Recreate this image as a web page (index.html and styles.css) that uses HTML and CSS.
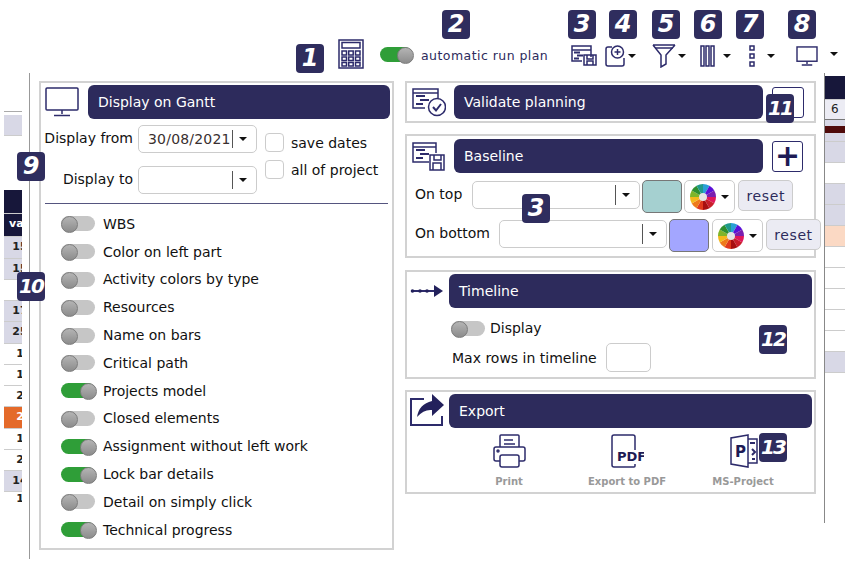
FILE: index.html
```html
<!DOCTYPE html>
<html lang="en">
<head>
    <meta charset="UTF-8" />
    <title>Gantt options</title>
    <link rel="stylesheet" href="styles.css">
</head>
<body>
<div class="screen">
    <div class="toolbar">
        <svg class="ico calc" viewBox="0 0 26 30"><rect x="1" y="1" width="24" height="28"/><rect x="4" y="3.500" width="18" height="5.500"/><path d="M4 12h4.500v4H4zM10.700 12h4.500v4h-4.500zM17.500 12H22v4h-4.500zM4 18h4.500v3.500H4zM10.700 18h4.500v3.500h-4.500zM17.500 18H22v3.500h-4.500zM4 23.500h4.500V27H4zM10.700 23.500h4.500V27h-4.500zM17.500 23.500H22V27h-4.500z"/></svg>
        <span class="toggle on run-toggle"></span>
        <span class="run-label">automatic run plan</span>
        <span class="tools">
            <svg class="ico t-base" viewBox="0 0 26 21"><path d="M20 12V1H1v15h10"/><path d="M1 5h19" /><path class="thick" d="M3 7.500h6M6 10.500h6M3 13.500h5"/><path d="M13 10h12v10H13zM16 10v4h6v-4M16 20v-4h6v4"/></svg>
            <svg class="ico t-add" viewBox="0 0 21 22"><path d="M7 2H3Q1 2 1 4v15q0 2 2 2h14q2 0 2-2v-6"/><circle cx="12.500" cy="7" r="6"/><path d="M12.500 4v6M9.500 7h6"/></svg>
            <i class="caret c-add"></i>
            <svg class="ico t-filter" viewBox="0 0 24 24"><path d="M1 1h22M1 1l8 10v12l5-3v-9l9-10"/><path d="M3 4h18"/></svg>
            <i class="caret c-filter"></i>
            <svg class="ico t-cols" viewBox="0 0 15 22"><path d="M1 1h3v20H1zM6 1h3v20H6zM11 1h3v20h-3z"/></svg>
            <i class="caret c-cols"></i>
            <svg class="ico t-rows" viewBox="0 0 6 22"><path d="M1 1h4v4H1zM1 9h4v4H1zM1 17h4v4H1z"/></svg>
            <i class="caret c-rows"></i>
            <svg class="ico t-mon" viewBox="0 0 23 21"><rect x="1" y="1" width="21" height="15"/><path d="M11.500 16v3M6 20h11"/></svg>
            <i class="caret c-mon"></i>
        </span>
    </div>

    <div class="main">
        <div class="gantt gantt-left">
            <div class="g g-line"></div>
            <div class="g g-lav g-20"></div>
            <div class="g g-space"></div>
            <div class="g g-dark g-24"></div>
            <div class="g g-head">va</div>
            <div class="g g-lav"><b>15</b></div>
            <div class="g g-lav"><b>15</b></div>
            <div class="g"></div>
            <div class="g g-lav"><b>17</b></div>
            <div class="g g-lav"><b>25</b></div>
            <div class="g"><b>1</b></div>
            <div class="g"><b>1</b></div>
            <div class="g"><b>2</b></div>
            <div class="g g-orange"><b>2</b></div>
            <div class="g"><b>1</b></div>
            <div class="g"><b>2</b></div>
            <div class="g g-lav"><b>14</b></div>
            <div class="g g-last"><b>1</b></div>
        </div>

        <div class="dialog">
            <section class="box left-box">
                <div class="box-head">
                    <svg class="ico head-mon" viewBox="0 0 34 30"><rect x="1" y="1" width="32" height="22" rx="1"/><path d="M17 23v4M9 28.500h16"/></svg>
                    <h2 class="bar">Display on Gantt</h2>
                </div>
                <div class="dates">
                    <div class="date-fields">
                        <div class="date-row">
                            <label class="from-label">Display from</label>
                            <span class="combo date-combo"><span class="combo-val">30/08/2021</span><i class="caret"></i></span>
                        </div>
                        <div class="date-row">
                            <label>Display to</label>
                            <span class="combo date-combo"><span class="combo-val"></span><i class="caret"></i></span>
                        </div>
                    </div>
                    <div class="date-checks">
                        <label class="check"><i class="box-check"></i>save dates</label>
                        <label class="check"><i class="box-check"></i>all of project</label>
                    </div>
                </div>
                <hr class="rule">
                <ul class="options">
                    <li><span class="toggle"></span>WBS</li>
                    <li><span class="toggle"></span>Color on left part</li>
                    <li><span class="toggle"></span>Activity colors by type</li>
                    <li><span class="toggle"></span>Resources</li>
                    <li><span class="toggle"></span>Name on bars</li>
                    <li><span class="toggle"></span>Critical path</li>
                    <li><span class="toggle on"></span>Projects model</li>
                    <li><span class="toggle"></span>Closed elements</li>
                    <li><span class="toggle on"></span>Assignment without left work</li>
                    <li><span class="toggle on"></span>Lock bar details</li>
                    <li><span class="toggle"></span>Detail on simply click</li>
                    <li><span class="toggle on"></span>Technical progress</li>
                </ul>
            </section>

            <div class="right-col">
                <section class="box validate-box">
                    <div class="box-head head-right">
                        <svg class="ico head-plan" viewBox="0 0 34 30"><path d="M26 11V2H1v19h12"/><path d="M1 6h25"/><path class="thick" d="M4 9h9M8 13h9M4 17h7"/><circle cx="25" cy="20" r="8.500"/><path class="thick" d="M21 20l3 3.500 5-6.500"/></svg>
                        <h2 class="bar">Validate planning</h2>
                        <span class="square-btn"></span>
                    </div>
                </section>

                <section class="box baseline-box">
                    <div class="box-head head-right">
                        <svg class="ico head-plan" viewBox="0 0 34 30"><path d="M24 12V2H1v19h16"/><path d="M1 6h23"/><path class="thick" d="M4 9h9M8 13h9M4 17h7"/><path d="M18 14h14v15H18zM22 14v5h7v-5M21 29v-7h8v7"/></svg>
                        <h2 class="bar">Baseline</h2>
                        <span class="square-btn plus-btn">+</span>
                    </div>
                    <div class="base-row base-top">
                        <label>On top</label>
                        <span class="combo base-combo"><span class="combo-val"></span><i class="caret"></i></span>
                        <span class="swatch swatch-teal"></span>
                        <span class="palette"><svg class="wheel" viewBox="0 0 26 26"><path fill="#2a9fd6" d="M13 13V0a13 13 0 0 1 6.500 1.740z"/><path fill="#5a10d8" d="M13 13l6.500-11.260A13 13 0 0 1 24.260 6.500z"/><path fill="#7a1fb0" d="M13 13l11.260-6.500A13 13 0 0 1 26 13z"/><path fill="#e0185a" d="M13 13h13a13 13 0 0 1-1.740 6.500z"/><path fill="#c81e2a" d="M13 13l11.260 6.500a13 13 0 0 1-4.760 4.760z"/><path fill="#a80f10" d="M13 13l6.500 11.260A13 13 0 0 1 13 26z"/><path fill="#e0391c" d="M13 13v13a13 13 0 0 1-6.500-1.740z"/><path fill="#ee7a1a" d="M13 13L6.500 24.260a13 13 0 0 1-4.760-4.760z"/><path fill="#f4b81c" d="M13 13L1.740 19.500A13 13 0 0 1 0 13z"/><path fill="#7fb52a" d="M13 13H0a13 13 0 0 1 1.740-6.500z"/><path fill="#2f8f2f" d="M13 13L1.740 6.500A13 13 0 0 1 6.500 1.740z"/><path fill="#1f9a8a" d="M13 13L6.500 1.740A13 13 0 0 1 13 0z"/><circle cx="13" cy="13" r="4" fill="#e4e4e4"/></svg><i class="caret"></i></span>
                        <span class="reset">reset</span>
                    </div>
                    <div class="base-row base-bottom">
                        <label>On bottom</label>
                        <span class="combo base-combo"><span class="combo-val"></span><i class="caret"></i></span>
                        <span class="swatch swatch-blue"></span>
                        <span class="palette"><svg class="wheel" viewBox="0 0 26 26"><path fill="#2a9fd6" d="M13 13V0a13 13 0 0 1 6.500 1.740z"/><path fill="#5a10d8" d="M13 13l6.500-11.260A13 13 0 0 1 24.260 6.500z"/><path fill="#7a1fb0" d="M13 13l11.260-6.500A13 13 0 0 1 26 13z"/><path fill="#e0185a" d="M13 13h13a13 13 0 0 1-1.740 6.500z"/><path fill="#c81e2a" d="M13 13l11.260 6.500a13 13 0 0 1-4.760 4.760z"/><path fill="#a80f10" d="M13 13l6.500 11.260A13 13 0 0 1 13 26z"/><path fill="#e0391c" d="M13 13v13a13 13 0 0 1-6.500-1.740z"/><path fill="#ee7a1a" d="M13 13L6.500 24.260a13 13 0 0 1-4.760-4.760z"/><path fill="#f4b81c" d="M13 13L1.740 19.500A13 13 0 0 1 0 13z"/><path fill="#7fb52a" d="M13 13H0a13 13 0 0 1 1.740-6.500z"/><path fill="#2f8f2f" d="M13 13L1.740 6.500A13 13 0 0 1 6.500 1.740z"/><path fill="#1f9a8a" d="M13 13L6.500 1.740A13 13 0 0 1 13 0z"/><circle cx="13" cy="13" r="4" fill="#e4e4e4"/></svg><i class="caret"></i></span>
                        <span class="reset">reset</span>
                    </div>
                </section>

                <section class="box timeline-box">
                    <div class="box-head head-wide">
                        <svg class="ico head-arrow" viewBox="0 0 34 12"><path class="thick" d="M1 6h25"/><circle class="dot" cx="2.500" cy="6" r="1.800"/><circle class="dot" cx="10" cy="6" r="1.800"/><circle class="dot" cx="17" cy="6" r="1.800"/><path class="dot" d="M24 0l9 6-9 6z"/></svg>
                        <h2 class="bar">Timeline</h2>
                    </div>
                    <div class="tl-display"><span class="toggle"></span>Display</div>
                    <div class="tl-rows"><label>Max rows in timeline</label><span class="small-input"></span></div>
                </section>

                <section class="box export-box">
                    <div class="box-head head-wide">
                        <svg class="ico head-export" viewBox="0 0 34 32"><path d="M14 5H1v26h31v-9" stroke-width="2"/><path class="dot" d="M22 0l12 11-12 11v-6Q14 15 7 23q2-13 15-16z"/></svg>
                        <h2 class="bar">Export</h2>
                    </div>
                    <div class="exports">
                        <div class="exp exp-print">
                            <svg class="ico exp-ico" viewBox="0 0 33 34"><path d="M7 13V2q0-1 1-1h17q1 0 1 1v11"/><path d="M11 6h9M11 10h11"/><path d="M7 27H3q-2 0-2-2V15q0-2 2-2h27q2 0 2 2v10q0 2-2 2h-4"/><rect x="7" y="21" width="19" height="12" rx="2"/><circle cx="5" cy="17" r="1"/></svg>
                            <span>Print</span>
                        </div>
                        <div class="exp exp-pdf">
                            <svg class="ico exp-ico" viewBox="0 0 33 34"><path d="M24 16V3q0-2-2-2H3Q1 1 1 3v28q0 2 2 2h20q1 0 1-1v-2"/><text class="pdf-text" x="6" y="27">PDF</text></svg>
                            <span>Export to PDF</span>
                        </div>
                        <div class="exp exp-ms">
                            <svg class="ico exp-ico ms-ico" viewBox="0 0 33 34"><path d="M18 1L1 4v26l17 3zM18 5h9v24h-9"/><text class="ms-text" x="5" y="23">P</text><path class="thick" d="M20 9h5M22 15l3 3-3 3M22 25h3"/></svg>
                            <span>MS-Project</span>
                        </div>
                    </div>
                </section>
            </div>
        </div>

        <div class="gantt gantt-right">
            <div class="g g-dark h-24"></div>
            <div class="g g-num">6</div>
            <div class="g g-lav h-6"></div>
            <div class="g g-red"></div>
            <div class="g g-lav h-9"></div>
            <div class="g g-lav"></div>
            <div class="g"></div>
            <div class="g g-lav"></div>
            <div class="g g-lav"></div>
            <div class="g g-peach"></div>
            <div class="g"></div>
            <div class="g"></div>
            <div class="g"></div>
            <div class="g"></div>
            <div class="g"></div>
            <div class="g g-lav"></div>
        </div>
    </div>

    <span class="badge b1">1</span>
    <span class="badge b2">2</span>
    <span class="badge b3">3</span>
    <span class="badge b4">4</span>
    <span class="badge b5">5</span>
    <span class="badge b6">6</span>
    <span class="badge b7">7</span>
    <span class="badge b8">8</span>
    <span class="badge b9">9</span>
    <span class="badge two b10">10</span>
    <span class="badge b3bis">3</span>
    <span class="badge two b11">11</span>
    <span class="badge two b12">12</span>
    <span class="badge two b13">13</span>
</div>
</body>
</html>
```
FILE: styles.css
```css
* {
    box-sizing: border-box;
}
body {
    margin: 0;
    background: #fff;
    color: #111;
    font-family: "DejaVu Sans", "Liberation Sans", sans-serif;
    font-size: 14px;
}
.screen {
    position: relative;
    width: 846px;
    height: 583px;
    overflow: hidden;
}

/* icons */
.ico {
    display: block;
    flex: none;
    fill: none;
    stroke: #2d2b6b;
    stroke-width: 1.5;
}
.ico .thick {
    stroke-width: 2;
}
.ico .dot {
    fill: #23215c;
    stroke: none;
}
.caret {
    display: block;
    flex: none;
    width: 0;
    height: 0;
    border-left: 4px solid transparent;
    border-right: 4px solid transparent;
    border-top: 4px solid #111;
}

/* toolbar */
.toolbar {
    display: flex;
    align-items: center;
    height: 72px;
    padding: 39px 0 3px 338px;
}
.calc {
    width: 26px;
    height: 30px;
}
.toggle {
    display: block;
    flex: none;
    position: relative;
    width: 34px;
    height: 15px;
    border-radius: 8px;
    background: #c6c6c6;
}
.toggle::after {
    content: "";
    position: absolute;
    left: 0;
    top: 0;
    width: 15px;
    height: 15px;
    border-radius: 50%;
    background: linear-gradient(#b4b4b4, #8c8c8c);
    border: 1px solid #7c7c7c;
}
.toggle.on {
    background: #2f9e38;
}
.toggle.on::after {
    left: 19px;
}
.run-toggle {
    margin-left: 16px;
    width: 32px;
}
.run-toggle.on::after {
    left: 17px;
}
.run-label {
    margin-left: 9px;
    margin-top: 2px;
    color: #2d2b5c;
    font-size: 12.5px;
    letter-spacing: 0.45px;
    white-space: nowrap;
}
.tools {
    display: flex;
    align-items: center;
    margin-left: 23px;
    margin-top: 3px;
}
.t-base { width: 26px; height: 21px; }
.t-add { width: 21px; height: 22px; margin-left: 8px; }
.t-filter { width: 24px; height: 24px; margin-left: 16px; }
.t-cols { width: 15px; height: 22px; margin-left: 14px; }
.t-rows { width: 6px; height: 22px; margin-left: 18px; }
.t-mon { width: 22px; height: 20px; margin-left: 21px; }
.c-add { margin-left: 2px; }
.c-filter { margin-left: 2px; }
.c-cols { margin-left: 8px; }
.c-rows { margin-left: 12px; }
.c-mon { margin-left: 12px; margin-top: -3px; }

/* main row */
.main {
    display: flex;
    align-items: flex-start;
}
.dialog {
    display: flex;
    gap: 11px;
    flex: none;
    width: 795px;
    height: 486px;
    margin-left: 7px;
    margin-top: 1px;
    padding: 8px 8px 0 9px;
    border-left: 1px solid #999;
}
.box {
    border: 2px solid #d2d2d2;
    background: #fff;
}
.left-box {
    width: 355px;
    height: 469px;
    padding: 2px 2px 0 4px;
}
.right-col {
    display: flex;
    flex-direction: column;
    width: 411px;
}
.box-head {
    display: flex;
    align-items: center;
}
.bar {
    flex: 1;
    height: 34px;
    margin: 0;
    padding-left: 10px;
    border-radius: 6px;
    background: #2d2b5c;
    color: #fff;
    font-size: 14px;
    font-weight: normal;
    line-height: 34px;
}
.head-mon {
    width: 34px;
    height: 30px;
    margin-right: 9px;
}

/* dates */
.dates {
    display: flex;
    margin-top: 6px;
}
.date-fields {
    width: 212px;
}
.date-row {
    display: flex;
    align-items: center;
    justify-content: flex-end;
    gap: 5px;
    height: 27px;
    margin-bottom: 14px;
}
.date-row label {
    padding-bottom: 2px;
    white-space: nowrap;
}
.from-label {
    margin-left: -1px;
}
.combo {
    display: flex;
    align-items: center;
    flex: none;
    height: 28px;
    border: 1px solid #ccc;
    border-radius: 5px;
    background: #fff;
}
.combo-val {
    flex: 1;
    height: 18px;
    padding-left: 9px;
    border-right: 1px solid #555;
    color: #3a3030;
    font-size: 14px;
    letter-spacing: 0.2px;
    line-height: 18px;
    white-space: nowrap;
}
.combo .caret {
    margin: 0 9px 0 6px;
}
.date-combo {
    width: 119px;
}
.date-checks {
    display: flex;
    flex-direction: column;
    gap: 8px;
    margin-left: 8px;
    padding-top: 8px;
}
.check {
    display: flex;
    align-items: center;
    gap: 7px;
    height: 19px;
    white-space: nowrap;
}
.box-check {
    display: block;
    width: 19px;
    height: 19px;
    border: 1px solid #ccc;
    border-radius: 4px;
}
.rule {
    height: 0;
    margin: -4px 2px 0 0;
    border: 0;
    border-top: 1.5px solid #55557f;
}

/* option list */
.options {
    margin: 0;
    padding: 6px 0 0 16px;
    list-style: none;
}
.options li {
    display: flex;
    align-items: center;
    gap: 8px;
    height: 27.8px;
    white-space: nowrap;
}

/* right column boxes */
.validate-box {
    height: 42px;
    padding: 2px 0 0 5px;
}
.baseline-box {
    height: 124px;
    margin-top: 11px;
    padding: 3px 0 0 5px;
}
.head-plan {
    width: 34px;
    height: 30px;
    margin-right: 8px;
}
.head-right .bar {
    flex: none;
    width: 309px;
    margin-left: 0;
}
.square-btn {
    display: block;
    flex: none;
    width: 32px;
    height: 31px;
    margin-left: 9px;
    border: 1.5px solid #2d2b6b;
    border-radius: 3px;
    color: #1d1b55;
    font-size: 30px;
    font-weight: bold;
    line-height: 27px;
    text-align: center;
}
.plus-btn {
    width: 31px;
    height: 31px;
}
.base-row {
    display: flex;
    align-items: flex-start;
    white-space: nowrap;
}
.base-row label {
    padding-top: 6px;
}
.base-top {
    margin-top: 7px;
    margin-left: 3px;
}
.base-top label {
    margin-right: 10px;
}
.base-bottom {
    margin-top: 6px;
    margin-left: 3px;
}
.base-bottom label {
    margin-right: 9px;
}
.base-combo {
    width: 168px;
    margin-top: 1px;
}
.base-combo .combo-val {
    height: 20px;
}
.swatch {
    display: block;
    flex: none;
    width: 40px;
    height: 33px;
    margin-left: 2px;
    border: 1px solid #777;
    border-radius: 5px;
}
.swatch-teal {
    background: #a5d0d0;
}
.swatch-blue {
    background: #a3a6ff;
}
.palette {
    display: flex;
    align-items: center;
    flex: none;
    width: 51px;
    height: 33px;
    margin-left: 2px;
    padding-left: 5px;
    border: 1px solid #ccc;
    border-radius: 5px;
}
.base-bottom .palette {
    margin-left: 3px;
}
.wheel {
    display: block;
    width: 26px;
    height: 26px;
}
.palette .caret {
    margin: 0 0 0 5px;
}
.reset {
    display: block;
    flex: none;
    width: 55px;
    height: 31px;
    margin-left: 3px;
    border: 1px solid #ccc;
    border-radius: 5px;
    background: #ebebf3;
    color: #2d2b5c;
    font-size: 14px;
    letter-spacing: 0.6px;
    line-height: 30px;
    text-align: center;
}
.timeline-box {
    height: 109px;
    margin-top: 12px;
    padding: 2px 2px 0 3px;
}
.head-wide .bar {
    flex: 1;
}
.head-arrow {
    width: 34px;
    height: 12px;
    margin-right: 5px;
}
.tl-display {
    display: flex;
    align-items: center;
    gap: 5px;
    height: 16px;
    margin: 12px 0 0 41px;
}
.tl-rows {
    display: flex;
    align-items: center;
    gap: 9px;
    margin: 7px 0 0 42px;
}
.small-input {
    display: block;
    width: 45px;
    height: 29px;
    border: 1px solid #ccc;
    border-radius: 5px;
}
.export-box {
    height: 104px;
    margin-top: 11px;
    padding: 2px 2px 0 3px;
}
.head-export {
    width: 34px;
    height: 32px;
    margin-right: 5px;
    margin-top: -3px;
}
.exports {
    position: relative;
    display: flex;
    padding-left: 55px;
    margin-top: 6px;
}
.exp {
    display: flex;
    flex-direction: column;
    align-items: center;
    flex: none;
    color: #999;
    font-size: 10px;
    font-weight: bold;
}
.exp span {
    margin-top: 8px;
    white-space: nowrap;
}
.exp-ico {
    width: 33px;
    height: 34px;
}
.ms-ico {
    margin-left: 7px;
}
.exp-print { width: 90px; margin-left: -1px; }
.exp-pdf { width: 90px; margin-left: 28px; }
.exp-ms { width: 80px; margin-left: 31px; }
.pdf-text {
    fill: #1d1b55;
    stroke: none;
    font-size: 13px;
    font-weight: bold;
}
.ms-text {
    fill: #1d1b55;
    stroke: none;
    font-size: 15px;
    font-weight: bold;
}

/* gantt rows behind the dialog */
.gantt {
    flex: none;
    font-size: 11px;
}
.gantt-left {
    width: 18px;
    margin-left: 4px;
    margin-top: 39px;
}
.gantt-right {
    width: 21px;
    height: 450px;
    margin-top: 1px;
    padding-top: 3px;
    border-left: 1px solid #888;
}
.g {
    height: 21px;
    overflow: hidden;
    border-bottom: 1px solid #ccc;
    color: #222;
    line-height: 19px;
}
.g b {
    display: block;
    width: 32px;
    text-align: center;
}
.gantt-left .g {
    height: 21.25px;
}
.gantt-left .g-line {
    height: 4px;
    border-bottom: 0;
    border-top: 1px solid #aaa;
}
.g-lav {
    background: #d8d8e6;
}
.gantt-left .g-space { height: 54px; border-bottom: 0; }
.g-dark, .g-head {
    background: #17173a;
    color: #fff;
}
.gantt-left .g-24, .h-24 { height: 24px; }
.gantt-left .g-head {
    height: 23px;
    line-height: 20px;
    font-weight: bold;
    padding-left: 5px;
}
.g-orange { background: #e46a2a; }
.g-orange b { color: #fff; }
.gantt-left .g-last { height: 14px; border-bottom: 0; line-height: 14px; }
.h-6 { height: 6px; border-bottom: 0; }
.h-9 { height: 9px; }
.g-red { height: 7px; border-bottom: 0; background: #4f0a0a; }
.g-peach { background: #fbd9c4; }
.g-num {
    height: 20px;
    background: #ececf4;
    border-bottom: 1px solid #777;
    font-size: 12px;
    padding-left: 6px;
}

/* numbered callouts over the screenshot */
.badge {
    position: absolute;
    width: 28px;
    height: 29px;
    border-radius: 4px;
    background: #2f2d5e;
    color: #fff;
    font-family: "DejaVu Sans", sans-serif;
    font-size: 24px;
    font-style: italic;
    font-weight: bold;
    line-height: 29px;
    text-align: center;
}
.two {
    font-size: 20px;
    letter-spacing: -2px;
    white-space: nowrap;
}
.b1 { left: 296px; top: 44px; }
.b2 { left: 442px; top: 10px; }
.b3 { left: 568px; top: 10px; }
.b4 { left: 609px; top: 10px; }
.b5 { left: 652px; top: 10px; }
.b6 { left: 694px; top: 10px; }
.b7 { left: 736px; top: 10px; }
.b8 { left: 788px; top: 10px; }
.b9 { left: 17px; top: 152px; }
.b10 { left: 17px; top: 272px; }
.b3bis { left: 522px; top: 194px; }
.b11 { left: 766px; top: 94px; }
.b12 { left: 759px; top: 325px; }
.b13 { left: 759px; top: 433px; }
```
